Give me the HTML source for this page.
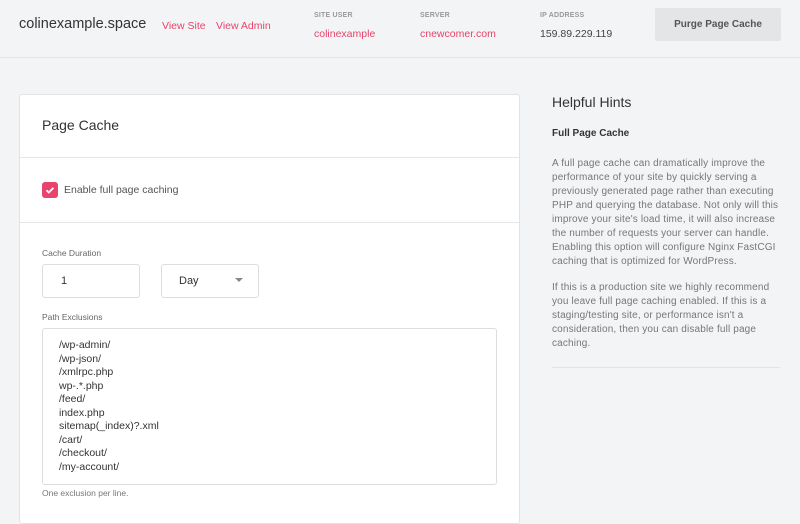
<!DOCTYPE html>
<html><head><style>
*{margin:0;padding:0;box-sizing:border-box}
body{width:800px;height:508px;overflow:hidden;background:#f3f4f6;font-family:"Liberation Sans",sans-serif;color:#333;position:relative}
.a{position:absolute;white-space:nowrap}
.pink{color:#e8436a}
.lab{font-size:7px;color:#999;font-weight:bold;letter-spacing:.2px}
.p{font-size:10px;line-height:14px;color:#777;letter-spacing:.15px}
</style></head><body>
<div class="a" style="left:0;top:0;width:800px;height:58px;border-bottom:1px solid #e2e3e5"></div>
<div class="a" style="left:19px;top:16px;font-size:14.5px;color:#333">colinexample.space</div>
<div class="a pink" style="left:162px;top:20px;font-size:10.5px">View Site</div>
<div class="a pink" style="left:216px;top:20px;font-size:10.5px">View Admin</div>
<div class="a lab" style="left:314px;top:12px">SITE USER</div>
<div class="a lab" style="left:420px;top:12px">SERVER</div>
<div class="a lab" style="left:540px;top:12px">IP ADDRESS</div>
<div class="a pink" style="left:314px;top:28px;font-size:10.5px">colinexample</div>
<div class="a pink" style="left:420px;top:28px;font-size:10.5px">cnewcomer.com</div>
<div class="a" style="left:540px;top:28px;font-size:10.5px;color:#444">159.89.229.119</div>
<div class="a" style="left:655px;top:8px;width:126px;height:33px;background:#e4e5e7;border-radius:2px;font-size:10px;font-weight:bold;color:#555;text-align:center;line-height:33px">Purge Page Cache</div>

<div class="a" style="left:19px;top:94px;width:501px;height:430px;background:#fff;border:1px solid #e2e3e5;border-radius:3px"></div>
<div class="a" style="left:42px;top:117px;font-size:14px;color:#333">Page Cache</div>
<div class="a" style="left:20px;top:157px;width:499px;height:1px;background:#e6e7e9"></div>
<div class="a" style="left:42px;top:182px;width:16px;height:16px;background:#e8436a;border-radius:3px"><svg width="16" height="16"><path d="M4.5 8.2l2.3 2.3 4.6-4.6" stroke="#fff" stroke-width="1.8" fill="none"/></svg></div>
<div class="a" style="left:64px;top:184px;font-size:10.5px;color:#555">Enable full page caching</div>
<div class="a" style="left:20px;top:222px;width:499px;height:1px;background:#e6e7e9"></div>
<div class="a" style="left:42px;top:248px;font-size:8.5px;color:#666">Cache Duration</div>
<div class="a" style="left:42px;top:264px;width:98px;height:34px;border:1px solid #ddd;border-radius:3px;font-size:11px;padding:10px 0 0 18px">1</div>
<div class="a" style="left:161px;top:264px;width:98px;height:34px;border:1px solid #ddd;border-radius:3px;font-size:11px;padding:10px 0 0 17px">Day</div>
<div class="a" style="left:235px;top:278px;width:0;height:0;border-left:4px solid transparent;border-right:4px solid transparent;border-top:4px solid #888"></div>
<div class="a" style="left:42px;top:312px;font-size:8.5px;color:#666">Path Exclusions</div>
<div class="a" style="left:42px;top:328px;width:455px;height:157px;border:1px solid #ddd;border-radius:3px"></div>
<div class="a" style="left:59px;top:339px;font-size:10.5px;line-height:13.5px;color:#333;white-space:pre">/wp-admin/
/wp-json/
/xmlrpc.php
wp-.*.php
/feed/
index.php
sitemap(_index)?.xml
/cart/
/checkout/
/my-account/</div>
<div class="a" style="left:42px;top:488px;font-size:8.5px;color:#777">One exclusion per line.</div>

<div class="a" style="left:552px;top:94px;font-size:14px;color:#333">Helpful Hints</div>
<div class="a" style="left:552px;top:128px;font-size:10px;font-weight:bold;color:#333">Full Page Cache</div>
<div class="a p" style="left:552px;top:157px">A full page cache can dramatically improve the<br>performance of your site by quickly serving a<br>previously generated page rather than executing<br>PHP and querying the database. Not only will this<br>improve your site's load time, it will also increase<br>the number of requests your server can handle.<br>Enabling this option will configure Nginx FastCGI<br>caching that is optimized for WordPress.</div>
<div class="a p" style="left:552px;top:281px">If this is a production site we highly recommend<br>you leave full page caching enabled. If this is a<br>staging/testing site, or performance isn't a<br>consideration, then you can disable full page<br>caching.</div>
<div class="a" style="left:552px;top:367px;width:228px;height:1px;background:#e2e3e5"></div>
</body></html>
